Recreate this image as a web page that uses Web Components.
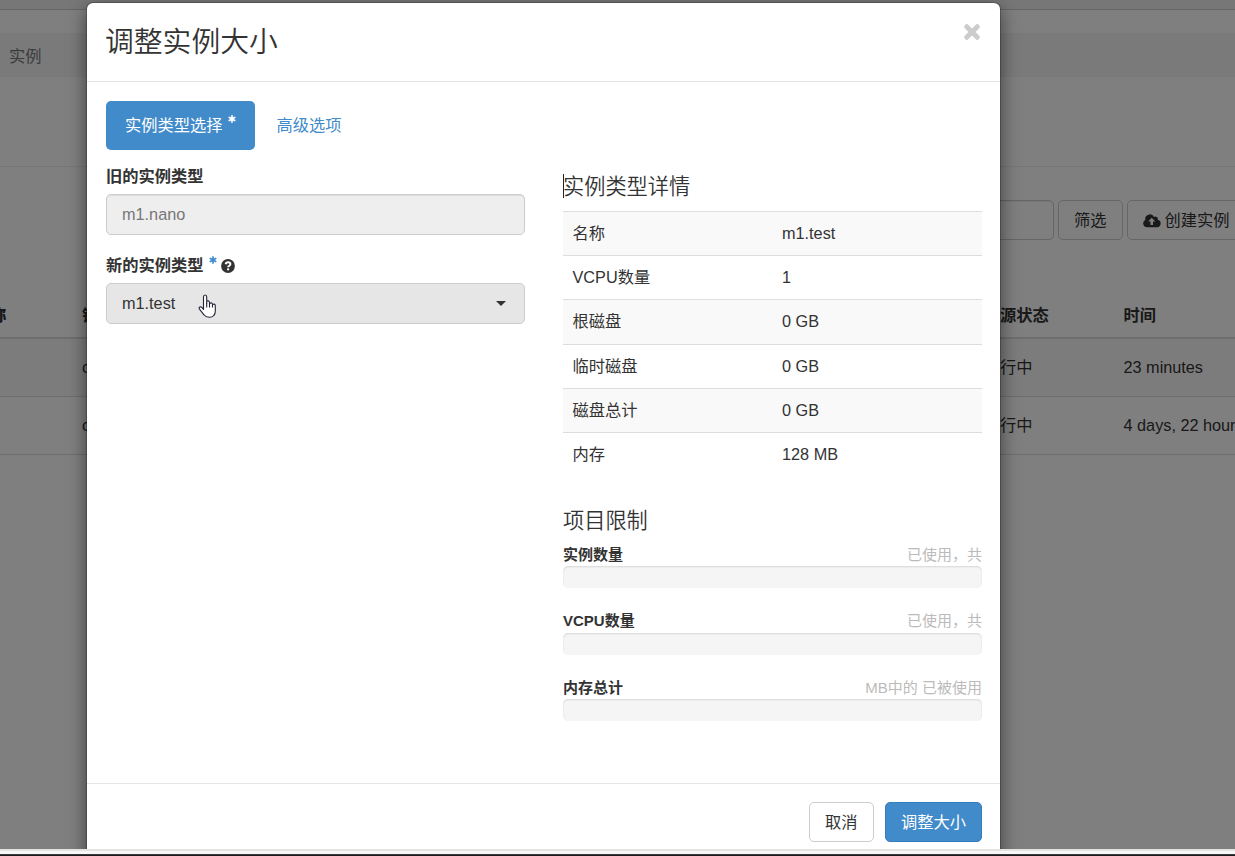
<!DOCTYPE html>
<html lang="zh-CN">
<head>
<meta charset="utf-8">
<title>调整实例大小</title>
<style>
html,body{margin:0;height:100%;overflow:hidden}
body{font:16.25px/23.2px "Liberation Sans","Noto Sans CJK SC",sans-serif;color:#333;background:#fff}
</style>
</head>
<body>
<resize-app></resize-app>
<script>
function define(name, html, setup) {
  const t = document.createElement('template');
  t.innerHTML = '<style>*{box-sizing:border-box}:host{display:block;box-sizing:border-box}</style>' + html;
  customElements.define(name, class extends HTMLElement {
    constructor() {
      super();
      this.attachShadow({mode: 'open'}).appendChild(t.content.cloneNode(true));
    }
    connectedCallback() { if (setup) setup(this, this.shadowRoot); }
  });
}

define('ui-button', `<style>
:host{display:flex;align-items:center;justify-content:center;height:40px;border:1px solid #ccc;border-radius:5px;background:#fff;padding:1px 15px 0;white-space:nowrap;flex:none}
:host([primary]){background:#428bca;border-color:#357ebd;color:#fff}
</style><slot></slot>`);

define('required-mark', `<style>
:host{display:block;width:8px;height:8px;flex:none}
svg{display:block}
</style><svg width="8" height="8" viewBox="0 0 8 8"><path d="M4 .9V7.1M1.3 2.4 6.7 5.6M6.7 2.4 1.3 5.6" stroke="currentColor" stroke-width="1.7" stroke-linecap="round"/></svg>`);

define('page-table', `<style>
.r{display:grid;grid-template-columns:82px 918px 123.5px 1fr;height:58px;align-items:center;border-bottom:1px solid #ddd;white-space:nowrap}
.r.h{height:48px;font-weight:bold;border-bottom:2px solid #ddd;padding-top:3px}
.r.s{background:#f9f9f9}
.f{display:flex}.f b{margin-left:-10px}
</style>
<div class="r h"><span class="f"><b>称</b></span><span>镜</span><span>源状态</span><span>时间</span></div>
<div class="r s"><span></span><span>c</span><span>行中</span><span>23 minutes</span></div>
<div class="r"><span></span><span>c</span><span>行中</span><span>4 days, 22 hours</span></div>`);

define('page-backdrop', `<style>
:host{position:absolute;inset:0;overflow:hidden;background:#fff;color:#333}
.nav{height:10px;background:#eee;border-bottom:1px solid #ccc}
.crumb{margin-top:23px;height:44px;background:#f5f5f5;padding:0 9px;line-height:46px;color:#777}
.head{height:90px;border-bottom:1px solid #eee}
.tools{display:flex;margin-top:33px;gap:4px;padding-left:800px}
.in{width:254px;flex:none;height:40px;border:1px solid #ccc;border-radius:5px;box-shadow:inset 0 1px 1px rgba(0,0,0,.075)}
svg{margin-right:4px}
page-table{margin-top:51px}
.shade{position:absolute;inset:0;background:rgba(0,0,0,.5)}
</style>
<div class="nav"></div><div class="crumb">实例</div><div class="head"></div>
<div class="tools"><div class="in"></div><ui-button>筛选</ui-button><ui-button>
<svg width="18" height="14" viewBox="0 0 18 14"><path fill="#333" fill-rule="evenodd" d="M4 13.2A3.8 3.8 0 0 1 2.3 6 4.7 4.7 0 0 1 11.1 3a2.4 2.4 0 0 1 3.6 2.7A3.8 3.8 0 0 1 14 13.2ZM8.7 3.8 5.2 7.4H7.5V11H10V7.4H12.3Z"/></svg>创建实例</ui-button></div>
<page-table></page-table>
<div class="shade"></div>`);

define('form-field', `<style>
.l{display:flex;font-weight:bold;height:24px;align-items:center;white-space:nowrap;padding-top:1px}
.b{display:flex;align-items:center;justify-content:space-between;height:41px;margin-top:6px;border:1px solid #ccc;border-radius:5px;background:#eee;color:#777;padding:0 18px 0 15px;box-shadow:inset 0 1px 1px rgba(0,0,0,.075)}
:host([select]) .b{background:#e6e6e6;color:#333;box-shadow:none}
.m{display:none}
:host([select]) .m{display:block}
svg{display:block}
.q{margin-left:4px}
required-mark.m{color:#428bca;margin:-12px 0 0 5px}
</style>
<div class="l"><slot name="label"></slot><required-mark class="m"></required-mark><svg class="m q" width="14" height="14" viewBox="0 0 14 14"><circle cx="7" cy="7" r="6.9" fill="#333"/><path d="M4.6 5.3C4.9 3.9 5.9 3.3 7.1 3.3c1.4 0 2.3.8 2.3 1.9C9.4 6.8 7.1 6.7 7.1 8.3" fill="none" stroke="#fff" stroke-width="1.9"/><rect x="6.1" y="9.4" width="2" height="1.9" fill="#fff"/></svg></div>
<div class="b"><slot></slot><svg class="m" width="10" height="5" viewBox="0 0 10 5"><path d="M0 0h10L5 5z" fill="#333"/></svg></div>`);

define('detail-row', `<style>
:host{display:grid;grid-template-columns:209.5px 1fr;height:44.2px;border-top:1px solid #ddd;align-items:center;padding-left:9.5px;background:#fff}
:host(:nth-of-type(odd)){background:#f9f9f9}
</style><span><slot></slot></span><span><slot name="v"></slot></span>`);

define('quota-bar', `<style>
:host{height:66.5px;font-size:15px}
.t{display:flex;justify-content:space-between;height:23px;align-items:center}
b{font-weight:bold}span{color:#bbb}
.p{height:22px;border-radius:5px;background:#f5f5f5;box-shadow:inset 0 1px 2px rgba(0,0,0,.12)}
</style><div class="t"><b><slot></slot></b><span><slot name="v"></slot></span></div><div class="p"></div>`);

define('resize-dialog', `<style>
:host{position:absolute;left:86px;top:2px;width:915px;height:900px;border:1px solid rgba(0,0,0,.2);border-radius:7px;background:#fff;background-clip:padding-box;box-shadow:0 6px 18px rgba(0,0,0,.5)}
header{display:flex;justify-content:space-between;height:79px;border-bottom:1px solid #e5e5e5;padding:20px 19px 0}
h4{margin:1px 0 0 -1px;font-size:28.8px;line-height:36px;font-weight:350;color:#333}
main{height:701px;padding:19px 18px 0 19px}
nav{display:flex;height:49px;gap:3px;color:#428bca}
.tab{display:flex;align-items:center;padding:1px 18.5px 0}
.on{background:#428bca;color:#fff;border-radius:5px;width:149px;padding-left:19px}
required-mark{margin:-14px 0 0 5px}
.c{display:grid;grid-template-columns:419px 419px;gap:38px}
.l{padding-top:14px;display:grid;gap:18px;align-content:start}
h5{margin:0;font-size:21.2px;font-weight:350;line-height:26px}
.a{padding-top:24px;height:61px;display:flex}
.a::before{content:"";width:1px;height:24px;background:#222;margin-right:-1px}
.d{height:297px}
.lim{height:35px}
footer{display:flex;justify-content:flex-end;gap:11px;border-top:1px solid #e5e5e5;padding:18px 18px 0}
footer ui-button{padding-left:15.5px;padding-right:15.5px}
footer ui-button[primary]{padding-left:15px;padding-right:15px}
</style>
<header><h4>调整实例大小</h4><svg width="18" height="18" viewBox="0 0 18 18"><path d="M3.7 3.7 14.3 14.3M14.3 3.7 3.7 14.3" stroke="#ccc" stroke-width="5" stroke-linecap="round"/></svg></header>
<main><nav><div class="tab on">实例类型选择<required-mark></required-mark></div><div class="tab">高级选项</div></nav>
<div class="c"><div class="l">
<form-field><span slot="label">旧的实例类型</span>m1.nano</form-field>
<form-field select><span slot="label">新的实例类型</span>m1.test</form-field></div>
<div><h5 class="a">实例类型详情</h5><div class="d">
<detail-row>名称<span slot="v">m1.test</span></detail-row>
<detail-row>VCPU数量<span slot="v">1</span></detail-row>
<detail-row>根磁盘<span slot="v">0 GB</span></detail-row>
<detail-row>临时磁盘<span slot="v">0 GB</span></detail-row>
<detail-row>磁盘总计<span slot="v">0 GB</span></detail-row>
<detail-row>内存<span slot="v">128 MB</span></detail-row></div>
<h5 class="lim">项目限制</h5>
<quota-bar>实例数量<span slot="v">已使用，共</span></quota-bar>
<quota-bar>VCPU数量<span slot="v">已使用，共</span></quota-bar>
<quota-bar>内存总计<span slot="v">MB中的 已被使用</span></quota-bar>
</div></div></main>
<footer><ui-button>取消</ui-button><ui-button primary>调整大小</ui-button></footer>`);

define('resize-app', `<style>
:host{display:grid;grid-template-rows:849px 7px;height:856px;overflow:hidden}
.v{position:relative;overflow:hidden}
.e{background:linear-gradient(#e3e3e3 0 2px,#f7f7f7 2px 5px,#3a3a3c 5px 6px,#1d1b20 6px)}
.cur{position:absolute;left:198px;top:294px}
</style>
<div class="v"><page-backdrop></page-backdrop><resize-dialog></resize-dialog>
<svg class="cur" width="19" height="25" viewBox="0 0 19 25"><path d="M5.5 15.5V3Q5.5 1 7.1 1T8.7 3V9.2V7.2Q11.2 6 11.5 8.7V9.5Q14.2 7.8 14.5 10.5Q17.3 9.2 17.3 12V17Q17.3 20 15.8 21.5Q14.3 23.3 11.2 23.3Q7.8 23.3 6 20.8L1.3 14.8Q.7 13 2.6 12.8Q4 13 5.5 15.5Z" fill="#fff" stroke="#223" stroke-width="1.1" stroke-linejoin="round"/><path d="M8.7 9v4.5M11.5 9v4.5M14.5 10.5v3" fill="none" stroke="#223" stroke-width="1.1"/></svg></div>
<div class="e"></div>`);
</script>
</body>
</html>
